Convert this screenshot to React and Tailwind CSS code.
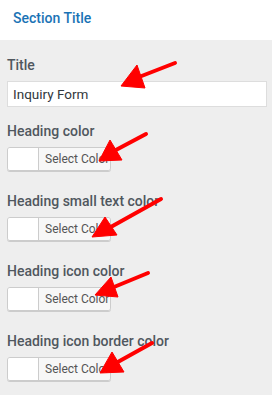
import React from "react";

const font = { fontFamily: "Roboto, 'Noto Sans', Arial, sans-serif" };

function ColorField({ label }) {
  return (
    <div className="flex flex-col">
      <div className="h-[20px] leading-[20px] text-[14px] font-medium text-[#50575e]">{label}</div>
      <div className="mt-[6px] flex h-[24px] w-[104px] rounded-[3px] border border-[#cccccc] shadow-[0_1px_0_#cccccc] overflow-hidden">
        <div className="w-[31px] bg-white border-r border-[#cccccc]" />
        <div className="flex-1 bg-[#f7f7f7] text-[12px] text-[#555555] leading-[22px] pl-[6px]">Select Color</div>
      </div>
    </div>
  );
}

export default function App() {
  const arrows = [
    { tail: [175, 63], shaftEnd: [139, 77], head: [[121, 86], [137, 65], [145, 88]] },
    { tail: [146, 134], shaftEnd: [114, 151], head: [[99, 161], [110, 140], [122, 160]] },
    { tail: [161, 199], shaftEnd: [109, 228], head: [[92, 237], [105, 217], [117, 235]] },
    { tail: [148, 273], shaftEnd: [114, 287], head: [[95, 295], [111, 277], [118, 297]] },
    { tail: [152, 343], shaftEnd: [116, 363], head: [[100, 373], [112, 352], [124, 372]] },
  ];
  return (
    <div className="relative w-[272px] h-[395px] bg-[#eeeeee] overflow-hidden" style={font}>
      <div className="h-[40px] bg-white pl-[13px] pt-[8px]">
        <div className="text-[14px] leading-[20px] font-medium text-[#1a73b5]">Section Title</div>
      </div>
      <div className="px-[7px] pt-[15px] flex flex-col">
        <div className="h-[20px] leading-[20px] text-[14px] font-medium text-[#50575e]">Title</div>
        <div className="mt-[6px] h-[26px] w-[260px] bg-white border border-[#dddddd] pl-[5px] text-[13.5px] leading-[24px] text-[#32373c]">
          Inquiry Form
        </div>
        <div className="mt-[14px] flex flex-col gap-[20px]">
          <ColorField label="Heading color" />
          <ColorField label="Heading small text color" />
          <ColorField label="Heading icon color" />
          <ColorField label="Heading icon border color" />
        </div>
      </div>
      <svg className="absolute inset-0 pointer-events-none" width="272" height="395" viewBox="0 0 272 395">
        {arrows.map((a, i) => (
          <g key={i} fill="#ff0000" stroke="#ff0000">
            <line x1={a.tail[0]} y1={a.tail[1]} x2={a.shaftEnd[0]} y2={a.shaftEnd[1]} strokeWidth="4" strokeLinecap="round" />
            <polygon points={a.head.map((p) => p.join(",")).join(" ")} strokeWidth="1" strokeLinejoin="round" />
          </g>
        ))}
      </svg>
    </div>
  );
}
